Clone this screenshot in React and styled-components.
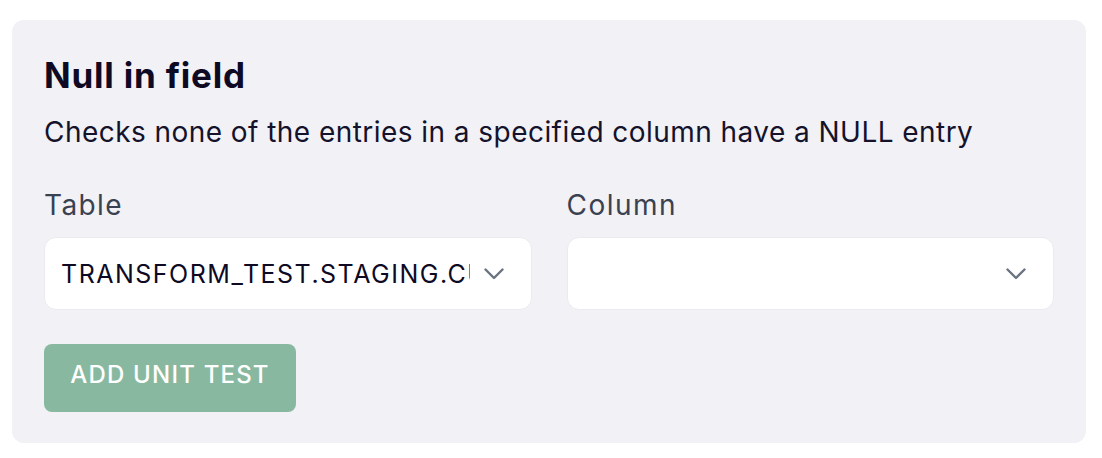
import React from 'react';
import styled, { createGlobalStyle } from 'styled-components';

const GlobalStyle = createGlobalStyle`
  body {
    margin: 0;
    background: #ffffff;
    font-family: Inter, "Open Sans", sans-serif;
  }
`;

const Page = styled.div`
  padding: 20px 16px 15px 12px;
`;

const Card = styled.div`
  background: #f1f1f6;
  border-radius: 12px;
  padding: 33px 32px 31px 32px;
  display: flex;
  flex-direction: column;
`;

const Title = styled.h2`
  margin: 0;
  font-size: 35px;
  line-height: 44px;
  font-weight: 700;
  letter-spacing: 0.8px;
  color: #0e0a24;
`;

const Description = styled.p`
  margin: 15px 0 0 0;
  font-size: 28px;
  line-height: 40px;
  color: #15122b;
  letter-spacing: 0.45px;
`;

const Fields = styled.div`
  display: grid;
  grid-template-columns: minmax(0, 1fr) minmax(0, 1fr);
  column-gap: 35px;
  margin-top: 35px;
`;

const Field = styled.div`
  display: flex;
  flex-direction: column;
  gap: 14px;
`;

const Label = styled.label`
  font-size: 28px;
  line-height: 36px;
  letter-spacing: ${(p) => p.$spacing || '1.2px'};
  color: #3a4151;
`;

const Select = styled.div`
  height: 73px;
  background: #ffffff;
  border: 1px solid #eaeaf0;
  border-radius: 12px;
  box-sizing: border-box;
  display: flex;
  align-items: center;
  padding: 0 27px 0 16px;
  gap: 14px;
`;

// long table names are clipped by the box, as in the app
const Value = styled.span`
  flex: 1;
  min-width: 0;
  overflow: hidden;
  white-space: nowrap;
  font-size: 25px;
  letter-spacing: 1.5px;
  color: #0e0a24;
`;

const Chevron = () => (
  <svg width="20" height="12" viewBox="0 0 20 12" fill="none">
    <path d="M1.5 1.5 L10 10 L18.5 1.5" stroke="#6b7280" strokeWidth="2.4" strokeLinecap="round" strokeLinejoin="round" />
  </svg>
);

const Button = styled.button`
  align-self: flex-start;
  margin-top: 34px;
  height: 68px;
  width: 252px;
  padding: 0 0 8px 0;
  border: none;
  border-radius: 8px;
  background: #88b9a0;
  color: #ffffff;
  font-family: inherit;
  font-size: 24px;
  font-weight: 500;
  letter-spacing: 1.2px;
`;

export default function App() {
  return (
    <>
      <GlobalStyle />
      <Page>
        <Card>
          <Title>Null in field</Title>
          <Description>Checks none of the entries in a specified column have a NULL entry</Description>
          <Fields>
            <Field>
              <Label $spacing="1.4px">Table</Label>
              <Select>
                <Value>TRANSFORM_TEST.STAGING.CUSTOMERS</Value>
                <Chevron />
              </Select>
            </Field>
            <Field>
              <Label $spacing="1.5px">Column</Label>
              <Select>
                <Value />
                <Chevron />
              </Select>
            </Field>
          </Fields>
          <Button>ADD UNIT TEST</Button>
        </Card>
      </Page>
    </>
  );
}
